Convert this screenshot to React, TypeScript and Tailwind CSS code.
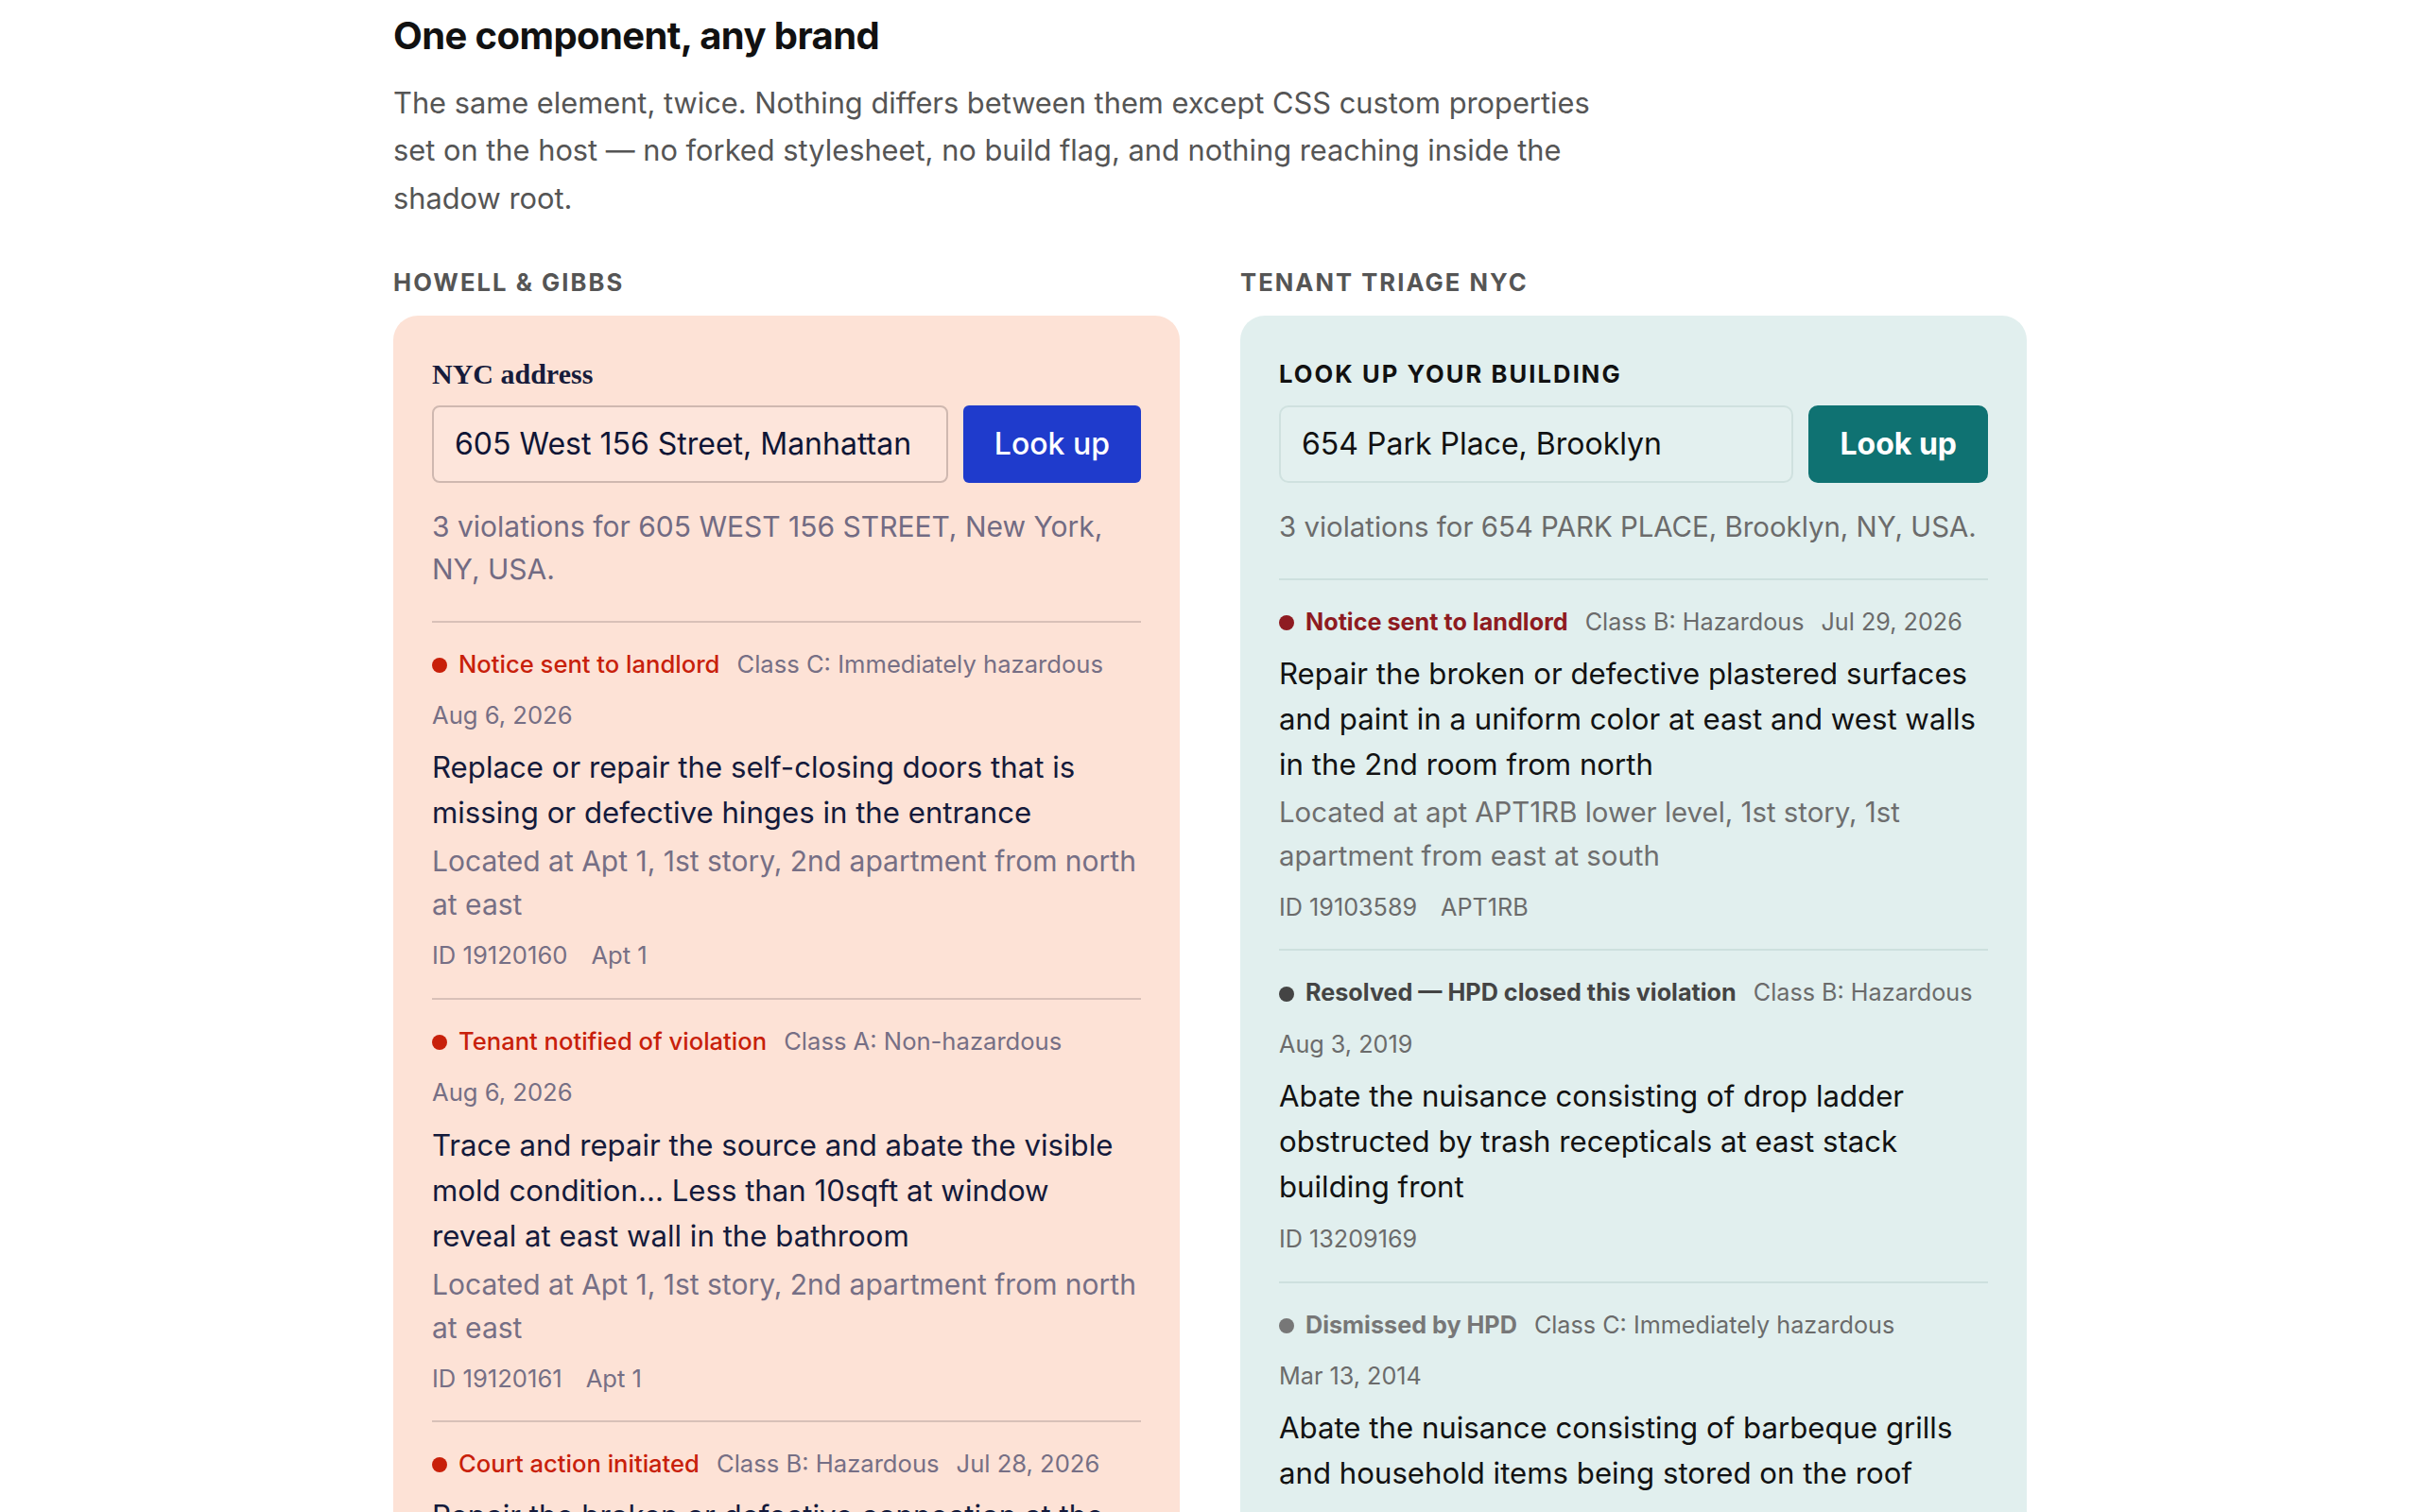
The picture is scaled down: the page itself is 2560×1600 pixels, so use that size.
import React from 'react'

type Violation = {
  status: string
  statusTone: 'open' | 'resolved' | 'dismissed'
  cls: string
  date: string
  text: string
  location?: string
  id: string
  unit?: string
}

type Theme = {
  panel: string
  label: string
  input: string
  button: string
  summary: string
  divider: string
  open: string
  resolved: string
  dismissed: string
  statusWeight: string
  meta: string
  desc: string
  loc: string
}

const howell: Theme = {
  panel: 'bg-[#fde2d6] rounded-[26px]',
  label: "font-['Liberation_Serif',serif] font-bold text-[30px] leading-[43px] text-[#161b3b]",
  input: 'rounded-[8px] border-2 border-[#cfb8b0] bg-[#fde5db] text-[#0f1535]',
  button: 'rounded-[6px] bg-[#1f3bcc] font-medium',
  summary: 'text-[30px] leading-[45px] text-[#726b83]',
  divider: 'border-[#d8c0b8]',
  open: 'text-[#c8200a] bg-[#c8200a]',
  resolved: 'text-[#444444] bg-[#444444]',
  dismissed: 'text-[#777777] bg-[#777777]',
  statusWeight: 'font-medium',
  meta: 'text-[25.6px] leading-[38.4px] text-[#766f85]',
  desc: 'text-[31.2px] leading-[48px] text-[#141a3b]',
  loc: 'text-[30px] leading-[46px] text-[#766f85]',
}

const triage: Theme = {
  panel: 'bg-[#e1efee] rounded-[26px]',
  label: 'font-bold text-[25.6px] leading-[43px] tracking-[0.08em] uppercase text-[#111111]',
  input: 'rounded-[10px] border-2 border-[#cfe1df] bg-[#e3f0ef] text-[#111111]',
  button: 'rounded-[10px] bg-[#0f7272] font-bold',
  summary: 'text-[29.4px] leading-[45px] text-[#6b6b6b]',
  divider: 'border-[#cde0de]',
  open: 'text-[#8e1b21] bg-[#8e1b21]',
  resolved: 'text-[#444444] bg-[#444444]',
  dismissed: 'text-[#777777] bg-[#777777]',
  statusWeight: 'font-bold',
  meta: 'text-[25.2px] leading-[38.4px] text-[#6b6b6b]',
  desc: 'text-[31.2px] leading-[48px] text-[#121212]',
  loc: 'text-[29.4px] leading-[46px] text-[#6e6e6e]',
}

const howellItems: Violation[] = [
  {
    status: 'Notice sent to landlord',
    statusTone: 'open',
    cls: 'Class C: Immediately hazardous',
    date: 'Aug 6, 2026',
    text: 'Replace or repair the self-closing doors that is missing or defective hinges in the entrance',
    location: 'Located at Apt 1, 1st story, 2nd apartment from north at east',
    id: 'ID 19120160',
    unit: 'Apt 1',
  },
  {
    status: 'Tenant notified of violation',
    statusTone: 'open',
    cls: 'Class A: Non-hazardous',
    date: 'Aug 6, 2026',
    text: 'Trace and repair the source and abate the visible mold condition... Less than 10sqft at window reveal at east wall in the bathroom',
    location: 'Located at Apt 1, 1st story, 2nd apartment from north at east',
    id: 'ID 19120161',
    unit: 'Apt 1',
  },
  {
    status: 'Court action initiated',
    statusTone: 'open',
    cls: 'Class B: Hazardous',
    date: 'Jul 28, 2026',
    text: 'Repair the broken or defective connection at the waste line under the kitchen sink',
    location: 'Located at Apt 1, 1st story, 2nd apartment from north at east',
    id: 'ID 19120158',
    unit: 'Apt 1',
  },
]

const triageItems: Violation[] = [
  {
    status: 'Notice sent to landlord',
    statusTone: 'open',
    cls: 'Class B: Hazardous',
    date: 'Jul 29, 2026',
    text: 'Repair the broken or defective plastered surfaces and paint in a uniform color at east and west walls in the 2nd room from north',
    location: 'Located at apt APT1RB lower level, 1st story, 1st apartment from east at south',
    id: 'ID 19103589',
    unit: 'APT1RB',
  },
  {
    status: 'Resolved — HPD closed this violation',
    statusTone: 'resolved',
    cls: 'Class B: Hazardous',
    date: 'Aug 3, 2019',
    text: 'Abate the nuisance consisting of drop ladder obstructed by trash recepticals at east stack building front',
    id: 'ID 13209169',
  },
  {
    status: 'Dismissed by HPD',
    statusTone: 'dismissed',
    cls: 'Class C: Immediately hazardous',
    date: 'Mar 13, 2014',
    text: 'Abate the nuisance consisting of barbeque grills and household items being stored on the roof',
    id: 'ID 10544871',
  },
]

function Item({ v, t }: { v: Violation; t: Theme }) {
  const tone = v.statusTone === 'open' ? t.open : v.statusTone === 'resolved' ? t.resolved : t.dismissed
  const [textTone, dotTone] = tone.split(' ')
  return (
    <li className={`border-t-2 ${t.divider} pt-[25px] pb-[25px]`}>
      <div className={`flex flex-wrap items-center gap-x-[18px] gap-y-[16px] ${t.meta}`}>
        <span className={`inline-flex items-center gap-[12px] ${t.statusWeight} ${textTone}`}>
          <span className={`w-[16px] h-[16px] rounded-full translate-y-[1px] ${dotTone}`} />
          {v.status}
        </span>
        <span>{v.cls}</span>
        <span>{v.date}</span>
      </div>
      <p className={`mt-[12px] ${t.desc}`}>{v.text}</p>
      {v.location && <p className={`mt-[4px] ${t.loc}`}>{v.location}</p>}
      <div className={`mt-[12px] flex gap-[25px] ${t.meta}`}>
        <span>{v.id}</span>
        {v.unit && <span>{v.unit}</span>}
      </div>
    </li>
  )
}

function Widget({ t, label, address, summary, items }: {
  t: Theme
  label: string
  address: string
  summary: string
  items: Violation[]
}) {
  return (
    <div className={`${t.panel} px-[41px] pt-[40px] pb-[40px]`}>
      <p className={t.label}>{label}</p>
      <div className="mt-[12px] flex gap-[16px]">
        <div className={`flex-1 h-[82px] flex items-center px-[22px] text-[32px] ${t.input}`}>{address}</div>
        <button className={`h-[82px] px-[33px] text-white text-[32px] ${t.button}`}>Look up</button>
      </div>
      <p className={`mt-[24px] ${t.summary}`}>{summary}</p>
      <ul className="mt-[32px]">
        {items.map(v => (
          <Item key={v.id} v={v} t={t} />
        ))}
      </ul>
    </div>
  )
}

export default function App() {
  return (
    <div className="min-h-screen bg-white font-['Inter',sans-serif]">
      <div className="mx-auto w-[1728px] pt-[14px]">
        <h2 className="text-[40px] leading-[48px] font-bold tracking-[-0.015em] text-[#111111]">
          One component, any brand
        </h2>
        <p className="mt-[22px] max-w-[1280px] text-[30.8px] leading-[50.4px] text-[#555555]">
          The same element, twice. Nothing differs between them except CSS custom properties set on the host — no
          forked stylesheet, no build flag, and nothing reaching inside the shadow root.
        </p>

        <div className="mt-[45px] grid grid-cols-2 gap-x-[64px]">
          <section>
            <h3 className="text-[25.6px] leading-[38.4px] font-bold tracking-[0.08em] uppercase text-[#555555]">
              Howell &amp; Gibbs
            </h3>
            <div className="mt-[15px]">
              <Widget
                t={howell}
                label="NYC address"
                address="605 West 156 Street, Manhattan"
                summary="3 violations for 605 WEST 156 STREET, New York, NY, USA."
                items={howellItems}
              />
            </div>
          </section>
          <section>
            <h3 className="text-[25.6px] leading-[38.4px] font-bold tracking-[0.08em] uppercase text-[#555555]">
              Tenant Triage NYC
            </h3>
            <div className="mt-[15px]">
              <Widget
                t={triage}
                label="Look up your building"
                address="654 Park Place, Brooklyn"
                summary="3 violations for 654 PARK PLACE, Brooklyn, NY, USA."
                items={triageItems}
              />
            </div>
          </section>
        </div>
      </div>
    </div>
  )
}
